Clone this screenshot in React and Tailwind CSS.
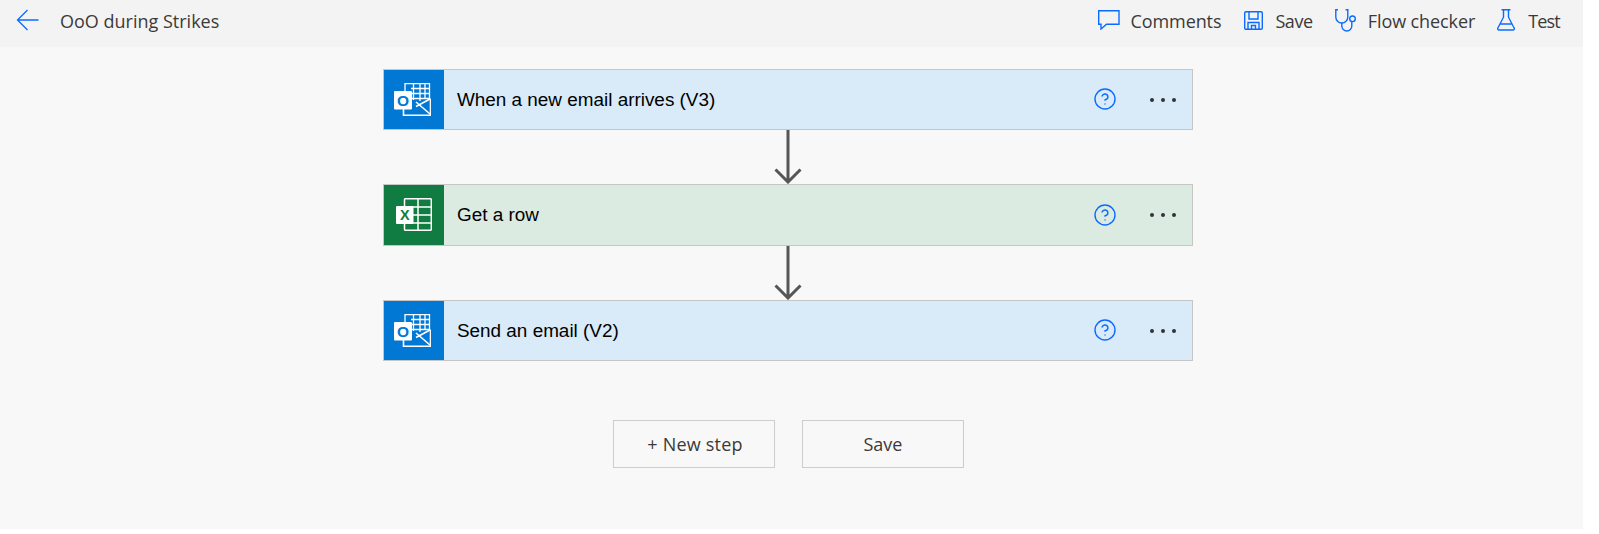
import { CircleHelp } from "lucide-react";

const blue = "#0a6cff";

const BackIcon = () => (
  <svg width="23" height="22" viewBox="0 0 23 22" fill="none" stroke={blue} strokeWidth="1.3" className="ml-[16px] -mt-[3px]">
    <path d="M22.500 11H1.500M11.500 1l-10 10 10 10" />
  </svg>
);

const CommentIcon = () => (
  <svg width="22" height="20" viewBox="0 0 22 20" fill="none" stroke={blue} strokeWidth="1.4" className="mr-[11px] -mt-[3px]">
    <path d="M.7.7h20.300v13.600H8.500L3 19v-4.700H.7z" />
  </svg>
);

const SaveIcon = () => (
  <svg width="19" height="19" viewBox="0 0 19 19" fill="none" stroke={blue} strokeWidth="1.4" className="mr-[12px] -mt-[2px]">
    <path d="M2 .7h15a1.300 1.300 0 0 1 1.300 1.300v15a1.300 1.300 0 0 1-1.300 1.300H2A1.300 1.300 0 0 1 .7 17V2A1.300 1.300 0 0 1 2 .7z" />
    <path d="M5 1v7h9V1M4 18v-6.500h11V18M7.500 18v-3.500h4V18" />
  </svg>
);

const StethIcon = () => (
  <svg width="22" height="23" viewBox="0 0 22 23" fill="none" stroke={blue} strokeWidth="1.4" className="mr-[11px] -mt-[3px]">
    <path d="M3 .8H.8V8a6 6 0 0 0 12 0V.8h-2.200" />
    <path d="M6.800 14v3a5 5 0 0 0 10 0v-4.500" />
    <circle cx="17.500" cy="9.800" r="2.800" />
  </svg>
);

const FlaskIcon = () => (
  <svg width="18" height="22" viewBox="0 0 18 22" fill="none" stroke={blue} strokeWidth="1.4" className="mr-[13px] -mt-[3px]">
    <path d="M4.500.7h9M6.500.7v7.500L.9 19a1.300 1.300 0 0 0 1.200 2h13.800a1.300 1.300 0 0 0 1.200-2L11.500 8.200V.7M3.500 15h11" />
  </svg>
);

const OutlookIcon = () => (
  <svg width="37" height="33" viewBox="0 0 37 33" fill="none" stroke="white" strokeWidth="1.3" className="mr-[3px] -mt-[1px]">
    <path d="M11 12V.7h24.500V16" />
    <path d="M19.500 .7V17M26 .7V18M31 .7V16M17 5.500h18.500M17 10.500h18.500M18 15.500h17" />
    <path d="M9.500 26v6.300h27V15.500" strokeWidth="1.6" />
    <path d="M36 16L22 23.500M22 19l14 12" strokeWidth="1.6" />
    <rect x="0" y="8" width="18" height="18.500" rx="1" fill="white" stroke="none" />
    <text x="9" y="22.500" textAnchor="middle" fontSize="15.500" fontWeight="700" fill="#0078d4" stroke="none" fontFamily="Liberation Sans, sans-serif">O</text>
  </svg>
);

const ExcelIcon = () => (
  <svg width="36" height="33" viewBox="0 0 36 33" fill="none" stroke="white" strokeWidth="1.5" className="-mt-[1px]">
    <rect x="8.500" y=".7" width="26.800" height="31.600" rx="1" />
    <path d="M8.500 9h26.800M8.500 17h26.800M8.500 25h26.800M22 .7v31.600" />
    <rect x="0" y="8" width="17.500" height="18" rx="1" fill="white" stroke="none" />
    <text x="8.800" y="22" textAnchor="middle" fontSize="14.500" fontWeight="700" fill="#107c41" stroke="none" fontFamily="Liberation Sans, sans-serif">X</text>
  </svg>
);

const DownArrow = () => (
  <div className="flex justify-center h-[54px]">
    <svg width="28" height="54" viewBox="0 0 28 54" fill="none" stroke="#565656" strokeWidth="3">
      <path d="M14 0v52M1.500 39.500L14 52l12.500-12.500" />
    </svg>
  </div>
);

const FlowCard = ({ title, icon, iconBg, bg, height }) => (
  <div className={`flex border border-[#c6c6c6] ${height} ${bg}`}>
    <div className={`w-[60px] shrink-0 flex items-center justify-center ${iconBg}`}>{icon}</div>
    <div className="flex-1 flex items-center pl-[13px] pt-[1px] text-[18.900px] text-black font-['Liberation_Sans',sans-serif]">{title}</div>
    <CircleHelp className="w-[24px] h-[24px] text-[#0a6cff] self-center mb-[1px] mr-[33px]" strokeWidth={1.4} />
    <div className="flex items-center gap-[7px] mr-[16px]">
      <span className="w-[4px] h-[4px] rounded-full bg-[#333]"></span>
      <span className="w-[4px] h-[4px] rounded-full bg-[#333]"></span>
      <span className="w-[4px] h-[4px] rounded-full bg-[#333]"></span>
    </div>
  </div>
);

const HeaderAction = ({ icon, label, className }) => (
  <div className={`flex items-center ${className}`}>
    {icon}
    <span>{label}</span>
  </div>
);

export default function App() {
  return (
    <div className="h-[529px] w-[1583px] bg-[#f8f8f8] font-['Open_Sans','Noto_Sans',sans-serif]">
      <header className="h-[47px] pb-[4px] bg-[#f3f3f3] flex items-center text-[18px] text-[#3b3a39]">
        <BackIcon />
        <span className="ml-[21px]">OoO during Strikes</span>
        <div className="ml-auto flex items-center gap-[23px] mr-[23px]">
          <HeaderAction icon={<CommentIcon />} label="Comments" className="tracking-[-0.1px]" />
          <HeaderAction icon={<SaveIcon />} label="Save" className="tracking-[-0.4px] -mr-[1px]" />
          <HeaderAction icon={<StethIcon />} label="Flow checker" className="tracking-[-0.1px] -mr-[1px]" />
          <HeaderAction icon={<FlaskIcon />} label="Test" className="tracking-[-0.8px]" />
        </div>
      </header>
      <div className="w-[810px] ml-[383px] mt-[22px]">
        <FlowCard title="When a new email arrives (V3)" icon={<OutlookIcon />} iconBg="bg-[#0078d4]" bg="bg-[#d9eaf9]" height="h-[61px]" />
        <DownArrow />
        <FlowCard title="Get a row" icon={<ExcelIcon />} iconBg="bg-[#107c41]" bg="bg-[#dcebe1]" height="h-[62px]" />
        <DownArrow />
        <FlowCard title="Send an email (V2)" icon={<OutlookIcon />} iconBg="bg-[#0078d4]" bg="bg-[#d9eaf9]" height="h-[61px]" />
      </div>
      <div className="flex gap-[27px] mt-[59px] ml-[613px] text-[18px] text-[#3b3a39]">
        <button className="w-[162px] h-[48px] pt-[1px] pl-[2px] border border-[#cdcdcd] tracking-[0.2px]">+ New step</button>
        <button className="w-[162px] h-[48px] pt-[1px] border border-[#cdcdcd]">Save</button>
      </div>
    </div>
  );
}
